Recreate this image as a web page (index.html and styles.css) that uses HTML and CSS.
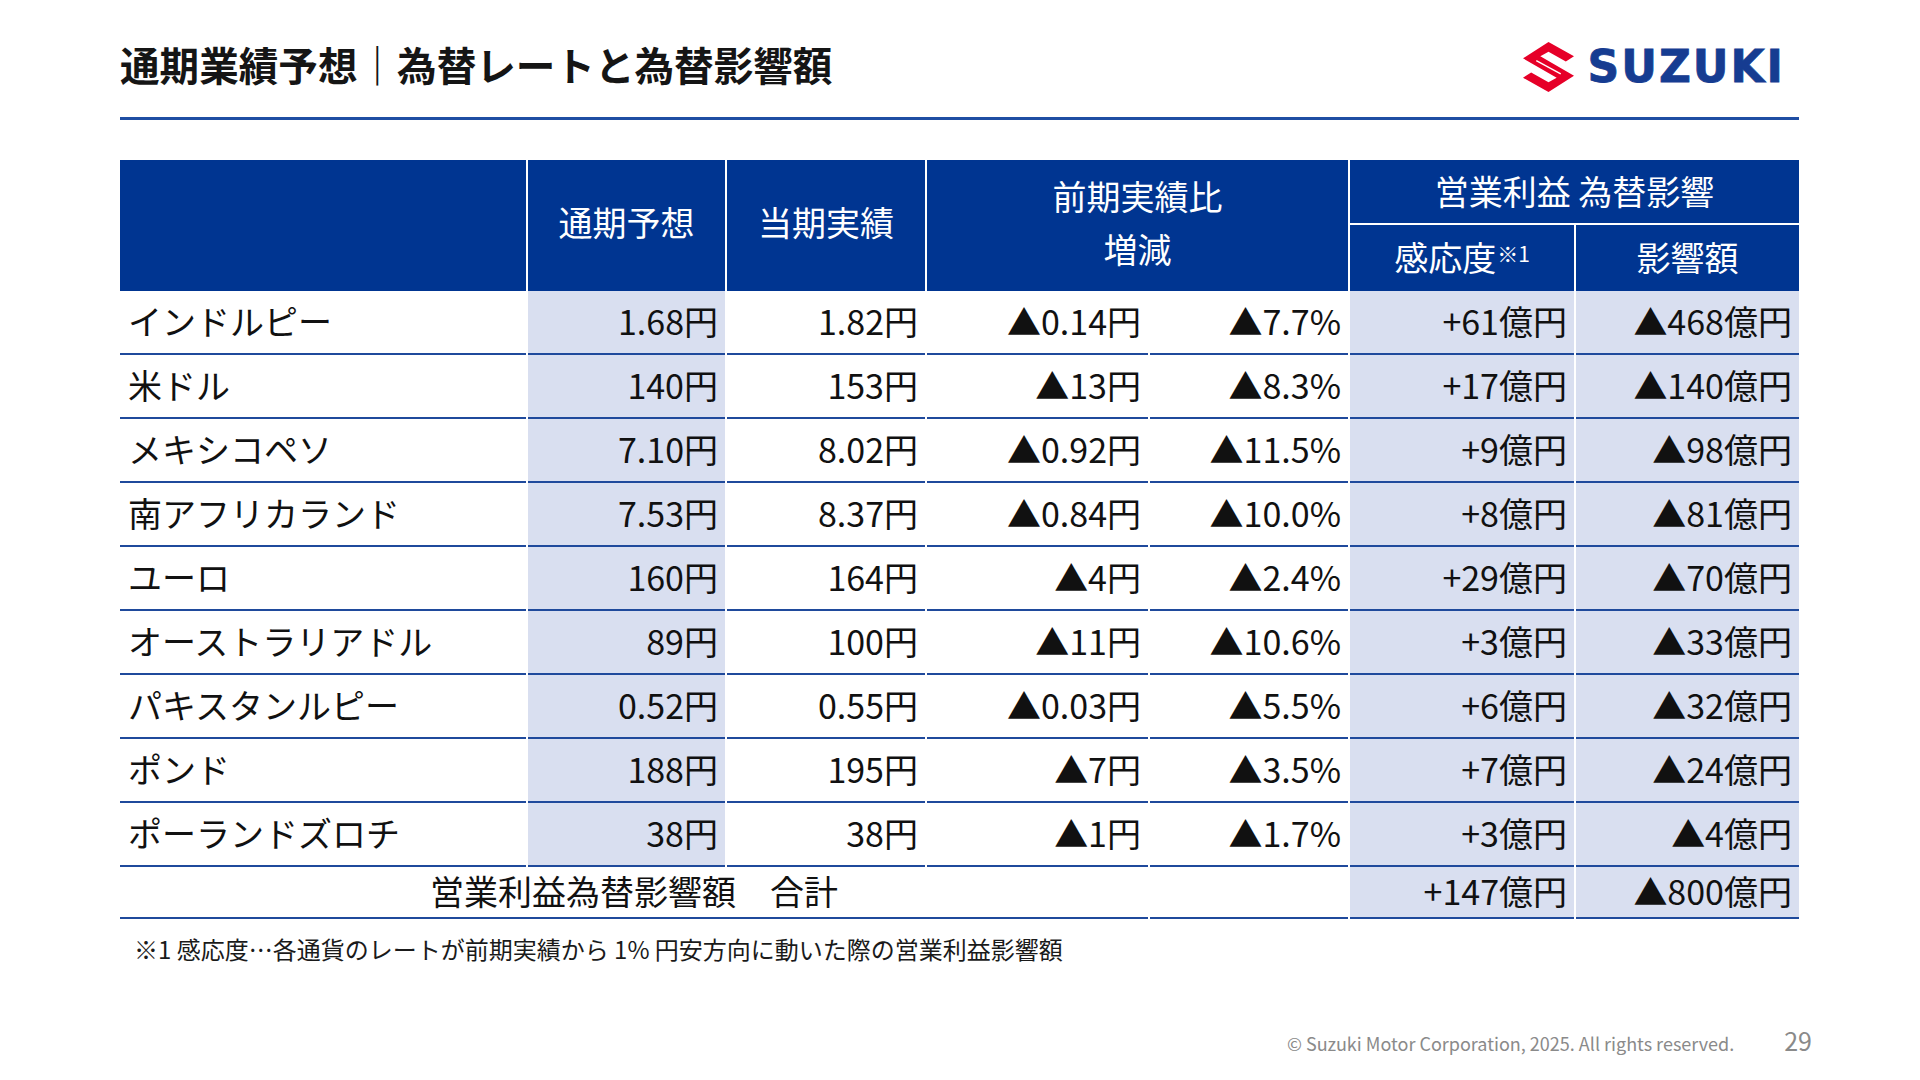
FILE: index.html
```html
<!DOCTYPE html>
<html lang="ja">
<head>
<meta charset="utf-8">
<title>通期業績予想｜為替レートと為替影響額</title>
<link rel="stylesheet" href="styles.css">
</head>
<body>
<div class="slide">
  <header class="top">
    <h1 class="title">通期業績予想｜為替レートと為替影響額</h1>
    <div class="logo">
      <svg class="logo-mark" width="51" height="50" viewBox="0 0 50 49">
        <polygon fill="#e60028" points="25,0 50,14 42,19 25,9.5 17,14 50,33 25,49 0,35 8,30 25,39.5 33,35 0,16"/>
        <line x1="13" y1="18.2" x2="37" y2="31.3" stroke="#fff" stroke-width="1.4"/>
      </svg>
      <span class="logo-text">SUZUKI</span>
    </div>
  </header>
  <div class="rule"></div>

  <div class="fx">
    <div class="h c-name"></div>
    <div class="h c-tall">通期予想</div>
    <div class="h c-tall">当期実績</div>
    <div class="h c-prev"><span>前期実績比</span><span>増減</span></div>
    <div class="h c-op">営業利益 為替影響</div>
    <div class="h c-sub">感応度<sup class="note">※1</sup></div>
    <div class="h c-sub">影響額</div>

    <div class="d name">インドルピー</div><div class="d num hl">1.68円</div><div class="d num">1.82円</div><div class="d num">▲0.14円</div><div class="d num">▲7.7%</div><div class="d num hl">+61億円</div><div class="d num hl">▲468億円</div>
    <div class="d name">米ドル</div><div class="d num hl">140円</div><div class="d num">153円</div><div class="d num">▲13円</div><div class="d num">▲8.3%</div><div class="d num hl">+17億円</div><div class="d num hl">▲140億円</div>
    <div class="d name">メキシコペソ</div><div class="d num hl">7.10円</div><div class="d num">8.02円</div><div class="d num">▲0.92円</div><div class="d num">▲11.5%</div><div class="d num hl">+9億円</div><div class="d num hl">▲98億円</div>
    <div class="d name">南アフリカランド</div><div class="d num hl">7.53円</div><div class="d num">8.37円</div><div class="d num">▲0.84円</div><div class="d num">▲10.0%</div><div class="d num hl">+8億円</div><div class="d num hl">▲81億円</div>
    <div class="d name">ユーロ</div><div class="d num hl">160円</div><div class="d num">164円</div><div class="d num">▲4円</div><div class="d num">▲2.4%</div><div class="d num hl">+29億円</div><div class="d num hl">▲70億円</div>
    <div class="d name">オーストラリアドル</div><div class="d num hl">89円</div><div class="d num">100円</div><div class="d num">▲11円</div><div class="d num">▲10.6%</div><div class="d num hl">+3億円</div><div class="d num hl">▲33億円</div>
    <div class="d name">パキスタンルピー</div><div class="d num hl">0.52円</div><div class="d num">0.55円</div><div class="d num">▲0.03円</div><div class="d num">▲5.5%</div><div class="d num hl">+6億円</div><div class="d num hl">▲32億円</div>
    <div class="d name">ポンド</div><div class="d num hl">188円</div><div class="d num">195円</div><div class="d num">▲7円</div><div class="d num">▲3.5%</div><div class="d num hl">+7億円</div><div class="d num hl">▲24億円</div>
    <div class="d name">ポーランドズロチ</div><div class="d num hl">38円</div><div class="d num">38円</div><div class="d num">▲1円</div><div class="d num">▲1.7%</div><div class="d num hl">+3億円</div><div class="d num hl">▲4億円</div>

    <div class="t t-label">営業利益為替影響額　合計</div><div class="t"></div><div class="t num hl">+147億円</div><div class="t num hl">▲800億円</div>
  </div>

  <p class="footnote">※1 感応度…各通貨のレートが前期実績から 1% 円安方向に動いた際の営業利益影響額</p>

  <footer class="foot">
    <span class="copy">© Suzuki Motor Corporation, 2025. All rights reserved.</span>
    <span class="page">29</span>
  </footer>
</div>
</body>
</html>
```

FILE: styles.css
```css
html, body {
  margin: 0;
  padding: 0;
  background: #ffffff;
}

body {
  font-family: "Noto Sans CJK JP", "Noto Sans", sans-serif;
  color: #111111;
}

.slide {
  width: 1920px;
  height: 1080px;
  display: flex;
  flex-direction: column;
  overflow: hidden;
}

.top {
  height: 117px;
  box-sizing: border-box;
  padding: 11px 137px 0 120px;
  display: flex;
  align-items: center;
  justify-content: space-between;
}

.title {
  margin: 0;
  font-size: 39.6px;
  font-weight: 700;
  color: #151515;
  line-height: 1.2;
  letter-spacing: 0;
}

.logo {
  display: flex;
  align-items: center;
  gap: 13px;
  margin-top: 5px;
}

.logo-mark {
  display: block;
}

.logo-text {
  font-family: "DejaVu Sans", sans-serif;
  font-weight: 700;
  font-size: 44px;
  color: #163c91;
  letter-spacing: 2px;
  margin-right: -2px;
  line-height: 1;
  -webkit-text-stroke: 0.8px #163c91;
}

.rule {
  height: 3px;
  margin: 0 121px 0 120px;
  background: #1f4ea3;
}

.fx {
  margin: 40px 0 0 120px;
  width: 1679px;
  display: grid;
  grid-template-columns: 406px 197px 198px 221px 198px 224px 223px;
  grid-template-rows: 65px 66px repeat(9, 64px) 52px;
  column-gap: 2px;
  row-gap: 0;
}

.h {
  background: #003591;
  color: #ffffff;
  font-size: 34px;
  display: flex;
  align-items: center;
  justify-content: center;
  line-height: 1;
  box-sizing: border-box;
  padding-bottom: 7px;
}

.c-name { grid-column: 1; grid-row: 1 / 3; }
.c-tall { grid-row: 1 / 3; }
.c-prev {
  grid-column: 4 / 6;
  grid-row: 1 / 3;
  flex-direction: column;
  gap: 19px;
}
.c-op {
  grid-column: 6 / 8;
  grid-row: 1;
  border-bottom: 2px solid #ffffff;
  padding-bottom: 2px;
}
.c-sub { grid-row: 2; padding-bottom: 2px; }

.note {
  font-size: 21px;
  vertical-align: top;
  position: relative;
  top: -4px;
  margin-left: 1px;
}

.d, .t {
  box-sizing: border-box;
  border-bottom: 2px solid #1f4a9c;
  font-size: 34px;
  display: flex;
  align-items: center;
  line-height: 1;
  color: #111111;
  padding-bottom: 2px;
}

.name {
  padding-left: 8px;
  justify-content: flex-start;
}

.num {
  justify-content: flex-end;
  padding-right: 7px;
}

.hl {
  background: #d9dff0;
}

.t-label {
  grid-column: 1 / 5;
  justify-content: center;
}

.footnote {
  margin: 15px 0 0 134px;
  font-size: 24px;
  line-height: 30px;
  color: #1a1a1a;
}

.foot {
  margin-top: auto;
  padding: 0 108px 22px 0;
  display: flex;
  justify-content: flex-end;
  align-items: baseline;
  gap: 50px;
  color: #8a8a8a;
}

.copy {
  font-size: 18px;
}

.page {
  font-size: 25px;
}
```
